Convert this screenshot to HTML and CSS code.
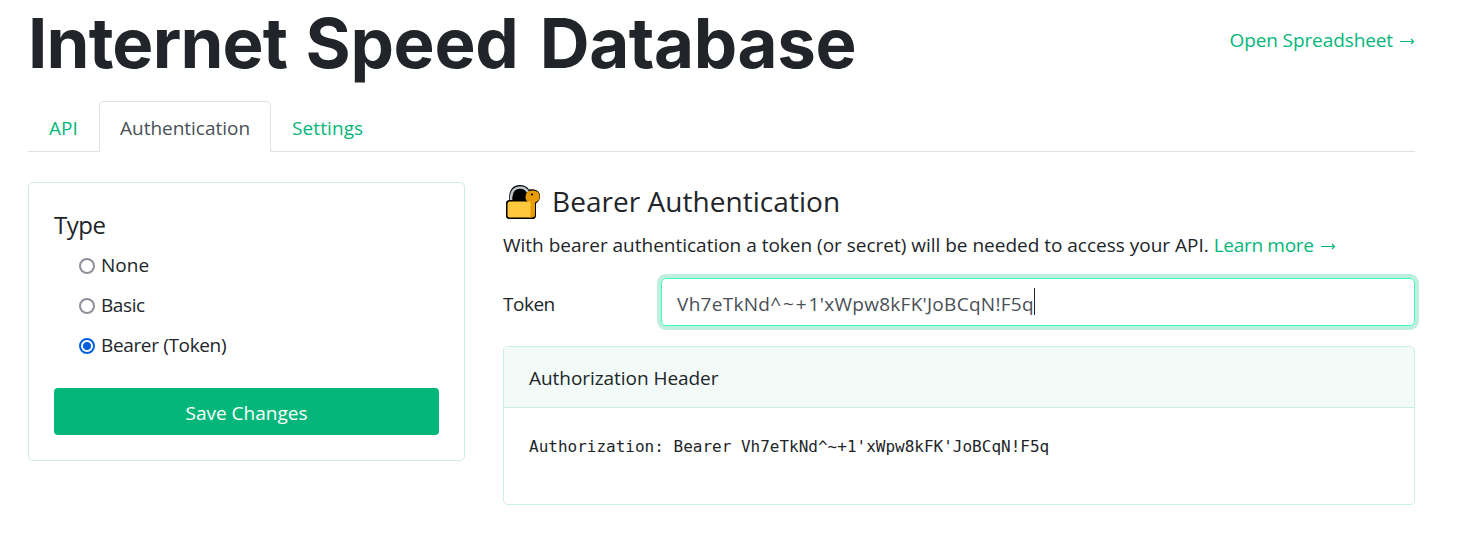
FILE: index.html
```html
<!DOCTYPE html>
<html lang="en">
<head>
<meta charset="utf-8">
<title>Internet Speed Database</title>
<link rel="stylesheet" href="styles.css">
</head>
<body>
<main class="page">
  <header class="header">
    <h1 class="title"><span class="title-first">Internet</span> <span class="title-second">Speed</span> <span class="title-third">Database</span></h1>
    <a class="link sheet-link"><span class="sheet-text">Open Spreadsheet</span><svg class="arrow" viewBox="0 0 16 10"><path d="M1 5.5H14.500M12 3L14.500 5.5L12 8"/></svg></a>
  </header>
  <nav class="tabs">
    <a class="tab"><span class="tab-api">API</span></a>
    <a class="tab active"><span class="tab-auth">Authentication</span></a>
    <a class="tab"><span class="tab-settings">Settings</span></a>
  </nav>
  <div class="columns">
    <section class="card type-card">
      <h2 class="type-title">Type</h2>
      <div class="options">
        <label class="option"><span class="radio"></span><span class="none">None</span></label>
        <label class="option"><span class="radio"></span><span class="basic">Basic</span></label>
        <label class="option"><span class="radio checked"></span><span class="bearer">Bearer (Token)</span></label>
      </div>
      <button class="save"><span class="save-text">Save Changes</span></button>
    </section>
    <section class="detail">
      <h2 class="detail-title">
        <svg class="lock" viewBox="0 0 37 37">
          <path class="outline" d="M4 16V13Q5 1 15 1Q21 1 24 5.5Q32 4.500 34.500 9.500Q36.500 15.500 31 19.500V31Q31 35 28 35H4.500Q1 35 1 32V19Q1 16.500 4 16Z"/>
          <path class="shackle" d="M6 16V13Q7 3.500 15 3.500Q20.500 3.500 23 8"/>
          <path class="keyhead" d="M20.500 13Q20.500 6.500 27.500 6.500Q34.500 6.500 34.500 12.500Q34.500 17 30 18.500V30Q30 33.500 27 33.500H24V18.500Q20.500 17 20.500 13Z"/>
          <path class="body" d="M2.500 20Q2.500 17.500 5 17.500H25.500V33.500H5Q2.500 33.500 2.500 31.500Z"/>
          <circle cx="27" cy="10.500" r="1.100"/>
        </svg>
        <span class="detail-text">Bearer Authentication</span>
      </h2>
      <p class="intro"><span class="intro-text">With bearer authentication a token (or secret) will be needed to access your API.</span><a class="link learn"><span class="learn-text">Learn more</span><svg class="arrow" viewBox="0 0 16 10"><path d="M1 5.5H14.500M12 3L14.500 5.5L12 8"/></svg></a></p>
      <div class="field">
        <span class="token-label">Token</span>
        <div class="input"><span class="value"><span class="value-start">Vh7eTkNd</span><span class="value-symbols">^~+</span><span class="value-end">1'xWpw8kFK'JoBCqN!F5q</span></span><span class="caret"></span></div>
      </div>
      <div class="card header-card">
        <div class="card-head"><span class="head-text">Authorization Header</span></div>
        <pre class="code">Authorization: Bearer Vh7eTkNd^~+1'xWpw8kFK'JoBCqN!F5q</pre>
      </div>
    </section>
  </div>
</main>
</body>
</html>
```
FILE: styles.css
```css
* { box-sizing: border-box; }
body { margin: 0; background: #fff; color: #212529; font: 19px/30px "Open Sans", "Noto Sans", sans-serif; }
h1, h2, p, pre { margin: 0; font-weight: 400; }
.page { width: 1387px; margin-left: 28px; }
.header { display: flex; justify-content: space-between; height: 101px; white-space: nowrap; }
.title { font: 700 69px/86px Inter, sans-serif; }
.title-first { letter-spacing: -0.85px; }
.title-second { margin-left: 2px; letter-spacing: -0.3px; }
.title-third { margin-left: 5px; letter-spacing: -0.4px; }
.link { color: #04b67a; }
.sheet-link { display: flex; align-items: center; height: 30px; margin-top: 25px; gap: 6px; }
.sheet-text { letter-spacing: -0.1px; }
.arrow { width: 16px; height: 10px; margin-top: 1px; fill: none; stroke: #04b67a; stroke-width: 1.2; }
.tabs { display: flex; height: 51px; border-bottom: 1px solid #dee2e6; }
.tab { height: 51px; padding: 11px 20px; border: 1px solid transparent; border-bottom: 0; color: #04b67a; white-space: nowrap; }
.tab:nth-child(1) { width: 71px; }
.tab.active { width: 172px; background: #fff; border-color: #dee2e6; border-radius: 5px 5px 0 0; color: #495057; }
.tab-auth { letter-spacing: -0.02px; }
.tab-settings { letter-spacing: 0.1px; }
.columns { display: flex; gap: 38px; margin-top: 30px; align-items: flex-start; }
.card { border: 1px solid #c9efe2; border-radius: 5px; }
.type-card { width: 437px; height: 279px; padding: 25px; }
.type-title { font-size: 24px; line-height: 34px; letter-spacing: -0.5px; }
.options { padding: 3px 0 0 25px; }
.option { display: flex; align-items: center; height: 40px; gap: 6px; white-space: nowrap; }
.radio { width: 16px; height: 16px; margin-top: 2px; border: 2px solid #8f8f9d; border-radius: 50%; }
.radio.checked { border-color: #0060df; background: radial-gradient(circle, #0060df 3.7px, #fff 4.4px); }
.basic { letter-spacing: -0.4px; }
.bearer { letter-spacing: -0.35px; }
.save { display: block; width: 385px; height: 47px; margin-top: 23px; padding: 2px 0 0; border: 0; border-radius: 4px; background: #04b67a; color: #fff; font: inherit; }
.detail { width: 912px; }
.detail-title { display: flex; align-items: center; height: 38px; font-size: 28px; white-space: nowrap; }
.lock { width: 37px; height: 37px; margin: 3px 10px 0 2px; }
.detail-text { letter-spacing: 0.04px; }
.outline { fill: #000; }
.shackle { fill: none; stroke: #c0c5ce; stroke-width: 2.6; }
.keyhead { fill: #e79b05; }
.body { fill: #ffc83d; }
.intro { display: flex; height: 30px; margin-top: 10px; gap: 5px; white-space: nowrap; }
.learn { display: flex; align-items: center; gap: 6px; }
.learn-text { letter-spacing: -0.3px; }
.intro-text { letter-spacing: -0.01px; }
.field { display: flex; align-items: center; height: 48px; margin-top: 18px; }
.token-label { width: 158px; padding-top: 4px; letter-spacing: -0.5px; }
.input { display: flex; align-items: center; width: 754px; height: 48px; padding: 3px 15px 0; border: 1px solid #38fcb8; border-radius: 5px; box-shadow: 0 0 0 4px #bfedde; color: #495057; }
.value-start { letter-spacing: 0.3px; }
.value-symbols { letter-spacing: 1.9px; }
.value-end { letter-spacing: 0.28px; }
.caret { width: 1px; height: 27px; margin-top: -4px; background: #212529; }
.header-card { height: 159px; margin-top: 20px; overflow: hidden; }
.card-head { height: 61px; padding: 16px 25px; border-bottom: 1px solid #c9efe2; background: #f2fbf8; }
.head-text { letter-spacing: -0.05px; }
.code { padding: 26px 25px; font: 16px/26px "DejaVu Sans Mono", monospace; }
```
